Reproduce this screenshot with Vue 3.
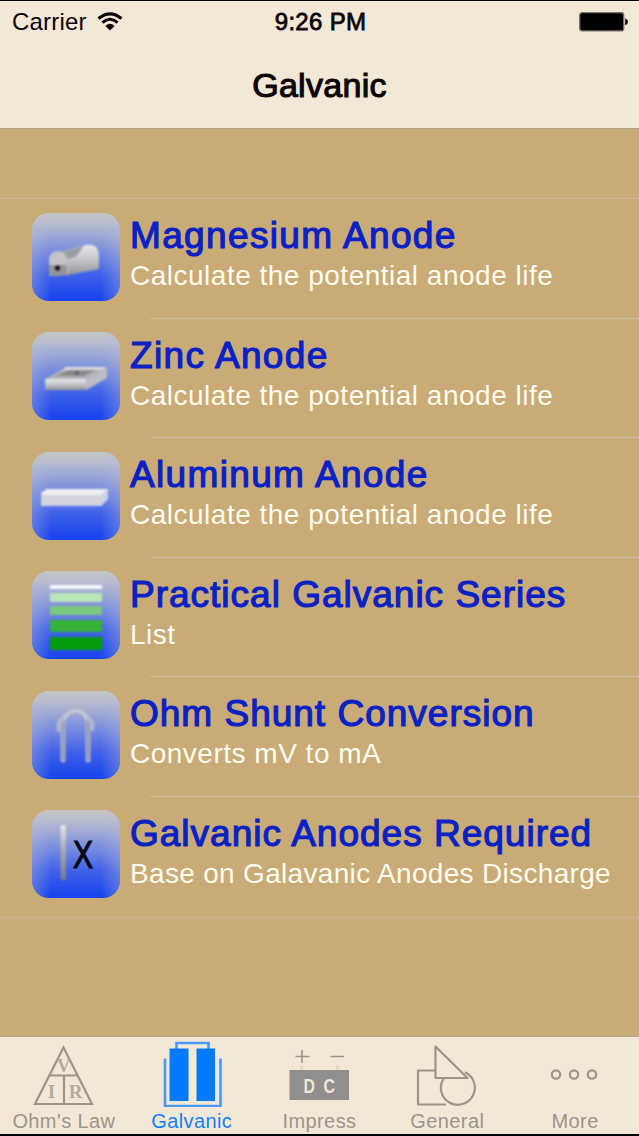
<template>
  <div class="screen">
    <header class="header">
      <div class="status">
        <div class="carrier">
          <span>Carrier</span>
          <svg width="26" height="19" viewBox="0 0 26 19">
            <path d="M1.5 6.6Q13 -3 24.5 6.6" fill="none" stroke="#0b0402" stroke-width="3.2" />
            <path d="M5.4 10.6Q13 4 20.6 10.6" fill="none" stroke="#0b0402" stroke-width="3" />
            <path d="M8.4 14Q13 9.6 17.6 14L13 18.6Z" fill="#0b0402" />
          </svg>
        </div>
        <div class="time">9:26 PM</div>
        <div class="battery">
          <svg width="50" height="20" viewBox="0 0 50 20">
            <rect x="0.7" y="0.7" width="44" height="18.2" rx="2.5" fill="#000" stroke="#77716a" stroke-width="1.3" />
            <path d="M46.2 6.5Q49 7.3 49 9.8T46.2 13.2Z" fill="#0b0402" />
          </svg>
        </div>
      </div>
      <h1 class="nav-title">Galvanic</h1>
    </header>

    <main class="content">
      <ul class="list">
        <li v-for="item in items" :key="item.icon" class="row">
          <svg class="row-icon" width="88" height="88" viewBox="0 0 88 88">
            <defs>
              <linearGradient :id="`bg-${item.icon}`" x1="0" y1="0" x2="0" y2="1">
                <stop offset="0" stop-color="#c6c7c3" />
                <stop offset="0.12" stop-color="#b9bdce" />
                <stop offset="0.45" stop-color="#7489e0" />
                <stop offset="0.7" stop-color="#3e60e9" />
                <stop offset="1" stop-color="#1742ee" />
              </linearGradient>
              <linearGradient :id="`metal-${item.icon}`" x1="0" y1="0" x2="0" y2="1">
                <stop offset="0" stop-color="#e8e9ec" />
                <stop offset="0.5" stop-color="#c4c5c8" />
                <stop offset="1" stop-color="#929499" />
              </linearGradient>
              <linearGradient :id="`edge-${item.icon}`">
                <stop offset="0" stop-color="#b9bfd6" stop-opacity="0.35" />
                <stop offset="0.22" stop-color="#b9bfd6" stop-opacity="0" />
                <stop offset="0.78" stop-color="#b9bfd6" stop-opacity="0" />
                <stop offset="1" stop-color="#b9bfd6" stop-opacity="0.35" />
              </linearGradient>
            </defs>
            <rect width="88" height="88" rx="17" :fill="`url(#bg-${item.icon})`" />
            <rect width="88" height="88" rx="17" :fill="`url(#edge-${item.icon})`" />

            <g v-if="item.icon === 'magnesium'" class="soft">
              <path d="M28 39L50 33Q60 30 64 34Q67 37 67 44V56L36 62L30 50Z" :fill="`url(#metal-${item.icon})`" />
              <path d="M29 39L52 33Q47 40 43 44L35 46Q34 41 29 39Z" fill="#9b9ca0" />
              <path d="M17 63V46Q18 38 26 38Q34 39 36 47V62Z" fill="#c3c4c9" />
              <path d="M17 63V52H35V62Z" fill="#94959a" />
              <circle cx="25.5" cy="55" r="2.6" fill="#111" />
            </g>

            <g v-else-if="item.icon === 'zinc'" class="soft">
              <path d="M13 47L34 35H74L54 47Z" fill="#b4b4b6" />
              <path d="M23 44L37 38H65L52 44Z" fill="#898a8c" />
              <path d="M34 35H74L70 38H31Z" fill="#dcdde0" />
              <circle cx="45" cy="41" r="1.8" fill="#555" />
              <path d="M13 47H54V58H13Z" :fill="`url(#metal-${item.icon})`" />
              <path d="M54 47L75 35V46L54 58Z" fill="#bcbdc1" />
            </g>

            <g v-else-if="item.icon === 'aluminum'" class="soft">
              <path d="M9 41L15 37H76V47L69 54H9Z" fill="#d3d4dd" />
              <path d="M9 41L15 37H76L69 43H11Z" fill="#eff0f1" />
              <path d="M69 43L76 37V47L69 54Z" fill="#cdd2e8" />
            </g>

            <g v-else-if="item.icon === 'series'" class="soft">
              <rect v-for="bar in bars" :key="bar.y" x="18" :y="bar.y" width="52" :height="bar.h" :fill="bar.fill" />
            </g>

            <g v-else-if="item.icon === 'shunt'" class="soft" fill="none" stroke-linecap="round">
              <path d="M31 69V29Q34 19 44 19T56 29V69" stroke="#b1b4c8" stroke-width="5" />
              <path d="M31 68V31M56 68V31" stroke="#858da8" stroke-width="1.5" />
              <path d="M32 26Q26 29 26.5 39M55 26Q61 29 60.5 38" stroke="#b4b8cb" stroke-width="4" />
              <path d="M33 27Q37 20 44 20T54 27" stroke="#c9ccd7" stroke-width="3" />
            </g>

            <g v-else>
              <linearGradient id="rod" x1="0" y1="0" x2="0" y2="1">
                <stop offset="0" stop-color="#e6e7ec" />
                <stop offset="0.45" stop-color="#aaabb0" />
                <stop offset="1" stop-color="#777b8f" />
              </linearGradient>
              <rect class="soft" x="28.5" y="15" width="5.5" height="55" rx="1" fill="url(#rod)" />
              <text x="41" y="58" textLength="20" lengthAdjust="spacingAndGlyphs" class="x-mark">X</text>
            </g>
          </svg>
          <div class="row-text">
            <div class="row-title">{{ item.title }}</div>
            <div class="row-detail">{{ item.detail }}</div>
          </div>
        </li>
      </ul>
    </main>

    <nav class="tabs">
      <div v-for="tab in tabs" :key="tab" class="tab" :class="{ active: tab === 'Galvanic' }">
        <svg width="64" height="70" viewBox="0 0 64 70" fill="none" stroke="#9c948a" stroke-width="2.2">
          <g v-if="tab === 'Ohm\'s Law'">
            <path d="M31.5 10.5L60 67H3ZM18 38.5H45.5M32 38.5V67" />
            <g class="ohm-letters">
              <text x="31.5" y="35">V</text>
              <text x="19.5" y="61">I</text>
              <text x="43.5" y="61">R</text>
            </g>
          </g>
          <g v-else-if="tab === 'Galvanic'" stroke="#4a98f5">
            <path d="M5 21.5V69H60.5V21.5" stroke-width="2.6" />
            <path d="M16.5 12V6H48.5V12" stroke-width="2.6" />
            <path d="M9.5 11.5H28.5V64H9.5ZM36.5 11.5H55V64H36.5Z" fill="#007aff" stroke="none" />
          </g>
          <g v-else-if="tab === 'Impress'">
            <path d="M8.5 19.5H22.5M15 13V26M43.5 19.5H57" stroke-width="1.6" />
            <path d="M14.5 28V33M50.5 28V33" stroke="#e3d8c9" stroke-width="3" />
            <rect x="2.5" y="33" width="59.5" height="30" fill="#918e8e" stroke="none" />
            <g class="dc-letters">
              <text x="16.5" y="56" textLength="11.5" lengthAdjust="spacingAndGlyphs">D</text>
              <text x="36.5" y="56" textLength="11.5" lengthAdjust="spacingAndGlyphs">C</text>
            </g>
          </g>
          <g v-else-if="tab === 'General'">
            <path d="M20.5 33.5H3V67.5H31M20.5 9.5V41H52.5Z" stroke-linejoin="round" />
            <path d="M28.6 41.5A17 17 0 1 0 50 35.3" />
          </g>
          <g v-else>
            <circle cx="13" cy="37.5" r="4.2" />
            <circle cx="31" cy="37.5" r="4.2" />
            <circle cx="49" cy="37.5" r="4.2" />
          </g>
        </svg>
        <span>{{ tab }}</span>
      </div>
    </nav>
  </div>
</template>

<script setup>
const items = [
  { icon: 'magnesium', title: 'Magnesium Anode', detail: 'Calculate the potential anode life' },
  { icon: 'zinc', title: 'Zinc Anode', detail: 'Calculate the potential anode life' },
  { icon: 'aluminum', title: 'Aluminum Anode', detail: 'Calculate the potential anode life' },
  { icon: 'series', title: 'Practical Galvanic Series', detail: 'List' },
  { icon: 'shunt', title: 'Ohm Shunt Conversion', detail: 'Converts mV to mA' },
  { icon: 'required', title: 'Galvanic Anodes Required', detail: 'Base on Galavanic Anodes Discharge' }
]

// Strips of the galvanic series icon, white down to green
const bars = [
  { y: 14, h: 4, fill: '#f5f7ff' },
  { y: 22, h: 9, fill: '#b9e5b8' },
  { y: 35, h: 9, fill: '#7bcb7c' },
  { y: 49, h: 12, fill: '#37b237' },
  { y: 66, h: 13, fill: '#079c0b' }
]

const tabs = ["Ohm's Law", 'Galvanic', 'Impress', 'General', 'More']
</script>

<style>
body {
  margin: 0;
}
</style>

<style scoped>
.screen {
  box-sizing: border-box;
  width: 639px;
  height: 1136px;
  display: flex;
  flex-direction: column;
  overflow: hidden;
  border-top: 1px solid #000;
  border-bottom: 2px solid #000;
  background: #c9ab77;
  font-family: "Liberation Sans", Arial, sans-serif;
}

.header {
  box-sizing: border-box;
  height: 128px;
  background: #f3e8d7;
  border-bottom: 1px solid #b5a28a;
}

.status {
  display: grid;
  grid-template-columns: 1fr auto 1fr;
  align-items: center;
  height: 42px;
  padding: 0 10px 0 12px;
  font-size: 24px;
  color: #0b0402;
}

.carrier {
  display: flex;
  align-items: center;
  gap: 10px;
  letter-spacing: 0.2px;
}

.carrier svg {
  margin-bottom: 2px;
}

.time {
  letter-spacing: 0.3px;
  -webkit-text-stroke: 0.8px #0b0402;
}

.battery {
  display: flex;
  justify-content: flex-end;
}

.nav-title {
  margin: 0;
  font-size: 34px;
  font-weight: 400;
  line-height: 84px;
  text-align: center;
  letter-spacing: 0.3px;
  color: #0b0402;
  -webkit-text-stroke: 1.1px #0b0402;
}

.content {
  flex: 1;
  padding-top: 69px;
}

.list {
  margin: 0;
  padding: 0;
  list-style: none;
  border-top: 1px solid #c9b694;
  border-bottom: 1px solid #c9b29a;
}

.row {
  box-sizing: border-box;
  display: flex;
  height: 119.6px;
  padding-left: 32px;
}

.row-icon {
  flex: none;
  margin-top: 13.5px;
}

.soft {
  filter: blur(0.8px);
}

.x-mark {
  font-size: 38px;
  letter-spacing: 0;
  fill: #080a18;
  stroke: #080a18;
  stroke-width: 1.2px;
}

.row-text {
  flex: 1;
  margin-left: 10px;
  padding-top: 14px;
  white-space: nowrap;
}

/* Separator starts past the icon, as in a table view */
.row:not(:last-child) {
  background: linear-gradient(#cfbca6, #cfbca6) 150px 100% / 489px 1px no-repeat;
}

.row-title {
  font-size: 37px;
  line-height: 45px;
  letter-spacing: 1.35px;
  color: #0a22c4;
  -webkit-text-stroke: 1.2px #0a22c4;
}

.row:nth-child(n + 4) .row-title {
  letter-spacing: 1px;
}

.row-detail {
  font-size: 28px;
  line-height: 35px;
  letter-spacing: 0.5px;
  color: #fffbef;
}

.row:last-child .row-detail {
  letter-spacing: 0.32px;
}

.tabs {
  box-sizing: border-box;
  display: flex;
  height: 98px;
  background: #f3e8d7;
  border-top: 1px solid #b5a28a;
}

.tab {
  flex: 1;
  display: flex;
  flex-direction: column;
  align-items: center;
  font-size: 20px;
  line-height: 24px;
  letter-spacing: 0.4px;
  color: #9c948a;
  white-space: nowrap;
}

.tab svg {
  flex: none;
}

.tab span {
  margin-top: 2px;
}

.tab.active {
  color: #157efb;
}

.ohm-letters {
  font-family: "Liberation Serif", serif;
  font-size: 19px;
  font-weight: 700;
  letter-spacing: 0;
  text-anchor: middle;
  fill: #b3aa9e;
  stroke: none;
}

.dc-letters {
  font-size: 21px;
  font-weight: 700;
  letter-spacing: 0;
  fill: #f0e6d6;
  stroke: none;
}
</style>
